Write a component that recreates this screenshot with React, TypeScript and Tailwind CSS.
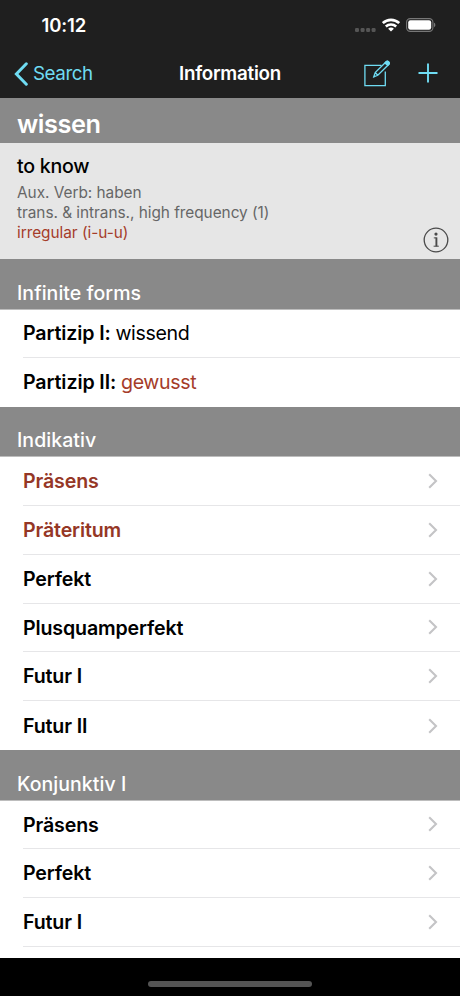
import React from "react";

type Entry = { label: string; irregular?: boolean };

const indikativ: Entry[] = [
  { label: "Präsens", irregular: true },
  { label: "Präteritum", irregular: true },
  { label: "Perfekt" },
  { label: "Plusquamperfekt" },
  { label: "Futur I" },
  { label: "Futur II" },
];

const konjunktiv: Entry[] = [
  { label: "Präsens" },
  { label: "Perfekt" },
  { label: "Futur I" },
];

function StatusBar() {
  return (
    <div className="flex h-[50px] items-center justify-between pl-[41.5px] pr-[24px] pt-[2px]">
      <span className="text-[18.5px] font-semibold tracking-[-0.15px] text-white">10:12</span>
      <div className="flex items-center">
        <svg className="mt-[8px]" width="21" height="4" viewBox="0 0 21 4" fill="#555">
          <rect x="0" y="0" width="4" height="4" rx="1.2" />
          <rect x="5.6" y="0" width="4" height="4" rx="1.2" />
          <rect x="11.1" y="0" width="4" height="4" rx="1.2" />
          <rect x="16.6" y="0" width="4" height="4" rx="1.2" />
        </svg>
        <svg className="mb-[2px] ml-[6px]" width="18" height="14" viewBox="0 0 18 14" fill="none" stroke="#fff">
          <path d="M.8 5.1C5.4 0.7 12.6 0.7 17.2 5.1" strokeWidth="2.7" />
          <path d="M3.8 8.5C6.7 5.8 11.3 5.8 14.2 8.5" strokeWidth="2.5" />
          <path d="M6.1 10.7C7.7 9.2 10.3 9.2 11.9 10.7L9 13.6Z" fill="#fff" stroke="none" />
        </svg>
        <svg className="mb-[2px] ml-[6px]" width="30" height="14" viewBox="0 0 30 14">
          <rect x="0.6" y="0.6" width="26.3" height="12.8" rx="3.6" fill="none" stroke="#777" strokeWidth="1.1" />
          <rect x="2.2" y="2.2" width="23" height="9.6" rx="2.2" fill="#fff" />
          <path d="M28 4.8c1.8.6 1.8 3.8 0 4.4z" fill="#777" />
        </svg>
      </div>
    </div>
  );
}

function NavBar() {
  return (
    <div className="grid h-[48px] grid-cols-[1fr_auto_1fr] items-center pb-px">
      <div className="flex items-center pl-[14px] text-[#6fdcf3]">
        <svg width="15" height="24" viewBox="0 0 15 24" fill="none" stroke="currentColor" strokeWidth="3" strokeLinecap="round" strokeLinejoin="miter">
          <path d="M12.3 1.8L2.4 12L12.3 22.2" />
        </svg>
        <span className="ml-[4px] pt-[2px] text-[18.8px] tracking-[-0.45px]">Search</span>
      </div>
      <span className="pt-[2px] text-[18.8px] font-semibold tracking-[-0.25px] text-white">Information</span>
      <div className="flex items-center justify-end pr-[22px] text-[#6fdcf3]">
        <svg width="27" height="27" viewBox="0 0 27 27" fill="none" stroke="currentColor" strokeWidth="1.3">
          <path d="M17.5 5.3H.9V25.6H21.3V11.5" />
          <path d="M9.7 16.9L11.2 12.5L22.4 1.6Q23.4 .8 24.5 1.8Q25.8 3 24.9 4.2L13.8 15.3ZM21.1 2.9L23.7 5.4M11.2 12.5L13.8 15.3" />
          <path d="M22.4 1.6Q23.4 .8 24.5 1.8Q25.8 3 24.9 4.2L23.7 5.4L21.1 2.9Z" fill="currentColor" />
        </svg>
        <svg className="mb-[2px] ml-[27px]" width="20" height="20" viewBox="0 0 20 20" stroke="currentColor" strokeWidth="1.9">
          <path d="M10 .5V19.5M.5 10H19.5" />
        </svg>
      </div>
    </div>
  );
}

function SectionHeader({ title }: { title: string }) {
  return (
    <h2 className="flex h-[50.5px] shrink-0 items-end border-b border-[#bdbdbd] bg-[#898989] pb-[2px] pl-[17px] text-[19.5px] font-medium leading-[28px] tracking-[0.05px] text-white">
      {title}
    </h2>
  );
}

function Chevron() {
  return (
    <svg width="10" height="16" viewBox="0 0 10 16" fill="none" stroke="#c4c4c6" strokeWidth="2.1">
      <path d="M1.2 1.3L8 8L1.2 14.7" />
    </svg>
  );
}

function Rows({ entries, clipped }: { entries: Entry[]; clipped?: boolean }) {
  return (
    <ul className="shrink-0 bg-white pl-[23px]">
      {entries.map((e, i) => (
        <li
          key={e.label}
          className={
            "flex h-[48.85px] items-center justify-between pr-[22px] text-[19.6px] font-semibold tracking-[-0.14px] " +
            (clipped || i < entries.length - 1 ? "border-b border-[#e6e6e8] " : "") +
            (e.irregular ? "text-[#953726]" : "text-black")
          }
        >
          <span className="pt-[1.7px]">{e.label}</span>
          <Chevron />
        </li>
      ))}
    </ul>
  );
}

export default function App() {
  return (
    <div className="flex h-[996px] w-[460px] flex-col overflow-hidden bg-black font-['Inter','Liberation_Sans',sans-serif]">
      <header className="h-[98px] shrink-0 bg-[#1f1f1f]">
        <StatusBar />
        <NavBar />
      </header>
      <main className="flex h-[860px] shrink-0 flex-col overflow-hidden bg-white">
        <h1 className="flex h-[44.5px] shrink-0 items-center bg-[#898989] pl-[17px] pt-[8px] text-[25.3px] font-semibold tracking-[-0.4px] text-white">
          wissen
        </h1>
        <section className="flex h-[116.5px] shrink-0 justify-between bg-[#e6e6e6] pl-[17px] pr-[11px]">
          <div className="pt-[10px]">
            <p className="text-[19.6px] font-medium leading-[27px] tracking-[-0.25px] text-black">to know</p>
            <div className="pt-[3px] text-[15.4px] leading-[20px] tracking-[-0.04px] text-[#666]">
              <p>Aux. Verb: haben</p>
              <p>trans. &amp; intrans., high frequency (1)</p>
              <p className="text-[#a53c2a]">irregular (i-u-u)</p>
            </div>
          </div>
          <svg className="mb-[6px] self-end" width="26" height="26" viewBox="0 0 26 26" fill="none" stroke="#4a4a4a">
            <circle cx="13" cy="13" r="11.8" strokeWidth="1.3" />
            <circle cx="13" cy="7.1" r="1.6" fill="#4a4a4a" stroke="none" />
            <path d="M10.8 10.9H13.4M10.6 19.2H15.8" strokeWidth="1" />
            <path d="M13.4 10.4V19.4" strokeWidth="1.9" />
          </svg>
        </section>
        <SectionHeader title="Infinite forms" />
        <ul className="shrink-0 bg-white pl-[23px] text-[19.6px] tracking-[-0.37px]">
          <li className="flex h-[48.5px] items-center border-b border-[#e6e6e8] pt-px">
            <span className="whitespace-pre font-semibold tracking-[-0.12px]">Partizip I: </span>wissend
          </li>
          <li className="flex h-[48.5px] items-center pt-px">
            <span className="whitespace-pre font-semibold tracking-[-0.1px]">Partizip II: </span>
            <span className="text-[#a53c2a]">gewusst</span>
          </li>
        </ul>
        <SectionHeader title="Indikativ" />
        <Rows entries={indikativ} />
        <SectionHeader title="Konjunktiv I" />
        <Rows entries={konjunktiv} clipped />
      </main>
      <footer className="flex flex-1 items-end justify-center pb-[9px]">
        <div className="h-[6px] w-[164px] rounded-full bg-[#545454]" />
      </footer>
    </div>
  );
}
